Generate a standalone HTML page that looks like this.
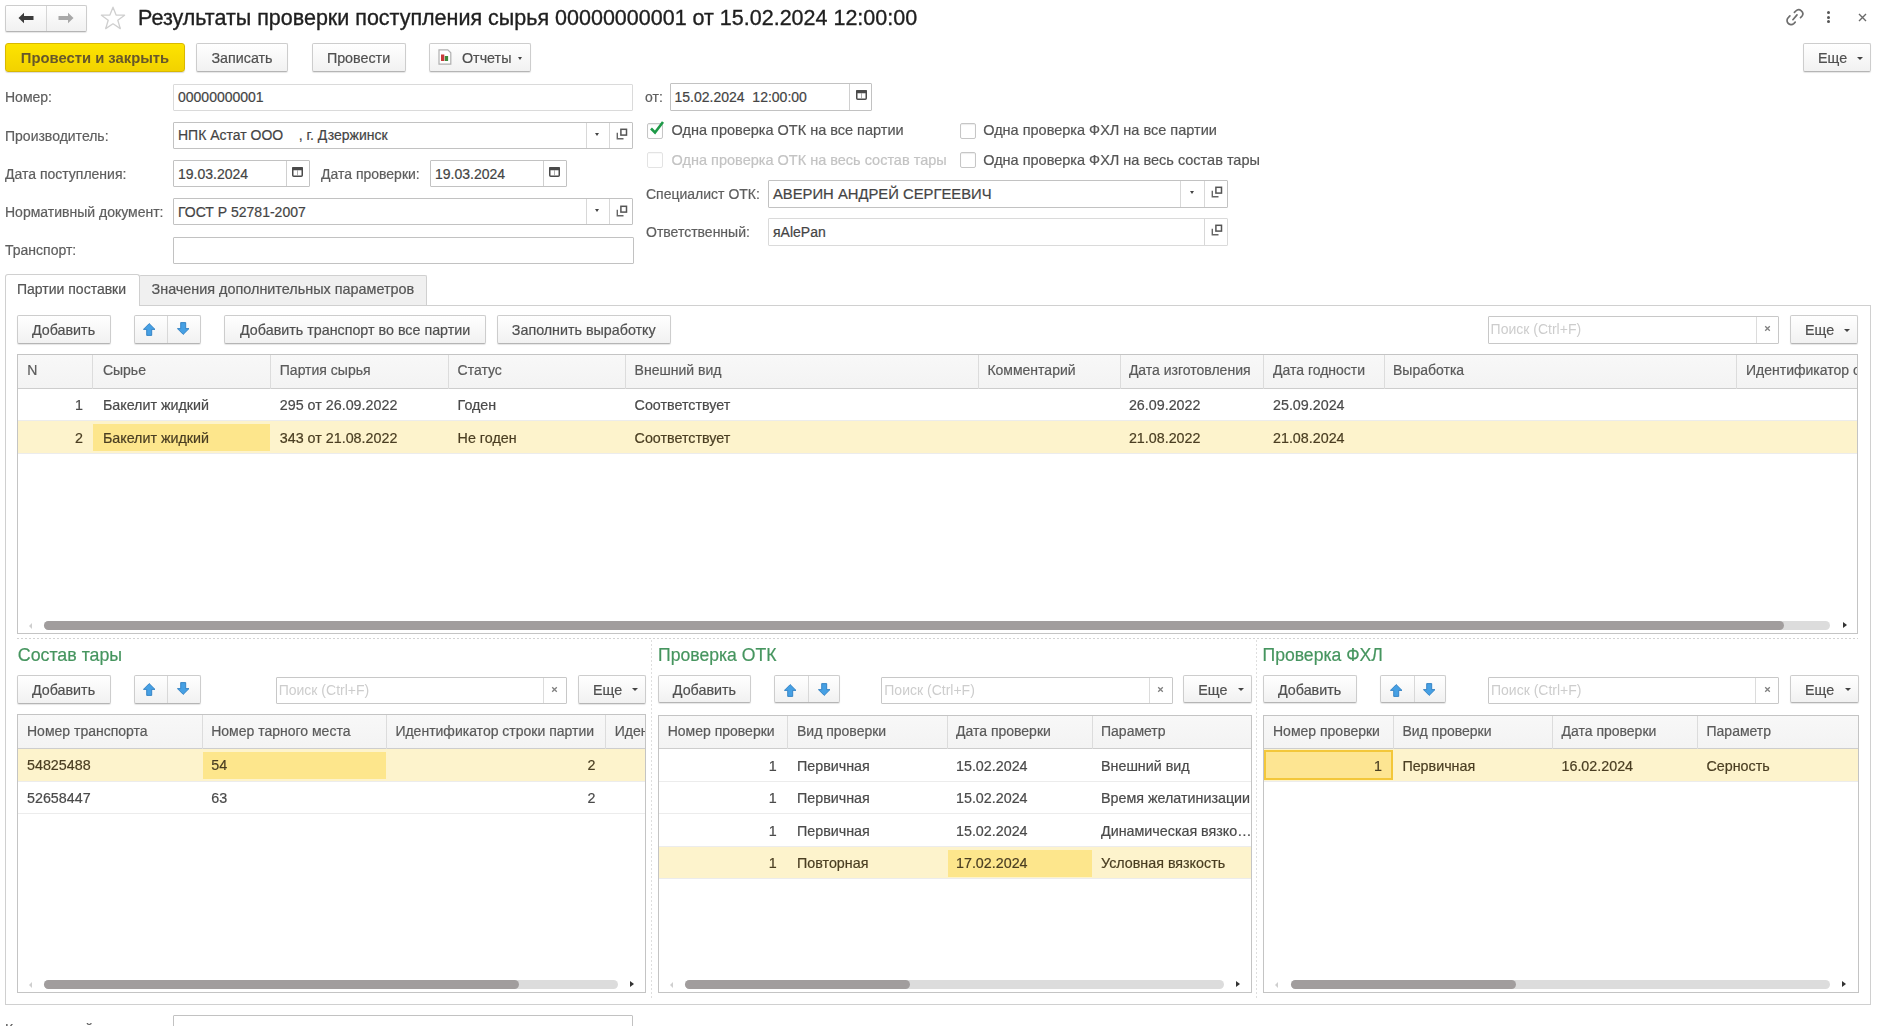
<!DOCTYPE html><html><head><meta charset="utf-8"><style>
html,body{margin:0;padding:0}
body{width:1890px;height:1026px;overflow:hidden;background:#fff;font-family:"Liberation Sans",sans-serif;color:#4d4d4d;position:relative}
.a{position:absolute;white-space:nowrap;-webkit-text-stroke:0.2px currentColor}
.btn{position:absolute;box-sizing:border-box;border:1px solid #cdcdcd;border-bottom-color:#b5b5b5;border-radius:2px;background:linear-gradient(#ffffff,#f1f1f1);box-shadow:0 1px 1px rgba(0,0,0,.10)}
.inp{position:absolute;box-sizing:border-box;border:1px solid #c8c8c8;border-radius:1px;background:#fff}
</style></head><body><div style="position:absolute;left:0;top:0;width:1890px;height:1026px;overflow:hidden;filter:blur(0.4px)">
<div class="btn" style="left:5px;top:5px;width:82px;height:27px"></div>
<div class="a" style="left:46px;top:6px;width:1px;height:25px;background:#d6d6d6"></div>
<svg class="a" style="left:18px;top:12px" width="16" height="12" viewBox="0 0 16 12"><path d="M0.5 6 L6 0.8 V4 H15.5 V8 H6 V11.2 Z" fill="#3b3b3b"/></svg>
<svg class="a" style="left:58px;top:12px" width="16" height="12" viewBox="0 0 16 12"><path d="M15.5 6 L10 0.8 V4 H0.5 V8 H10 V11.2 Z" fill="#a8a8a8"/></svg>
<svg class="a" style="left:100px;top:6px" width="26" height="24" viewBox="0 0 26 24"><path d="M13 1.2 L16.1 9 L24.6 9.2 L17.8 14.3 L20.3 22.6 L13 17.8 L5.7 22.6 L8.2 14.3 L1.4 9.2 L9.9 9 Z" fill="none" stroke="#cfcfcf" stroke-width="1.3" stroke-linejoin="round"/></svg>
<div class="a" style="left:138px;top:6px;font-size:21.5px;color:#1f1f1f;font-weight:400;-webkit-text-stroke:0.35px #1f1f1f">Результаты проверки поступления сырья 00000000001 от 15.02.2024 12:00:00</div>
<svg class="a" style="left:1782px;top:4px" width="28" height="26" viewBox="0 0 28 26"><g fill="none" stroke="#6e6e6e" stroke-width="1.7" stroke-linecap="round"><path d="M12.4 8.4 L13.8 7.0 A4.05 4.05 0 0 1 19.9 12.3 L18.5 13.7"/><path d="M7.9 11.9 L6.5 13.3 A4.1 4.1 0 0 0 11.8 19.6 L13.2 18.2"/><path d="M10.9 15.7 L15 10.9"/></g></svg>
<div class="a" style="left:1827.2px;top:11.2px;width:3px;height:3px;border-radius:50%;background:#555"></div>
<div class="a" style="left:1827.2px;top:15.8px;width:3px;height:3px;border-radius:50%;background:#555"></div>
<div class="a" style="left:1827.2px;top:20.4px;width:3px;height:3px;border-radius:50%;background:#555"></div>
<svg class="a" style="left:1857.5px;top:13px" width="9" height="9" viewBox="0 0 9 9"><path d="M1 1 L8 8 M8 1 L1 8" stroke="#6a6a6a" stroke-width="1.4"/></svg>
<div class="a" style="left:5px;top:43px;width:180px;height:29px;box-sizing:border-box;border:1px solid #d9b800;border-radius:3px;background:linear-gradient(#fde400,#f2d200);box-shadow:0 1px 1px rgba(0,0,0,.15)"></div>
<div class="a" style="left:5px;width:180px;text-align:center;top:49.5px;font-size:14.8px;font-weight:700;color:#66572a;-webkit-text-stroke:0">Провести и закрыть</div>
<div class="btn" style="left:196px;top:43px;width:92px;height:29px"></div>
<div class="a" style="left:196px;width:92px;text-align:center;top:49.5px;font-size:14.3px;color:#505050">Записать</div>
<div class="btn" style="left:311.5px;top:43px;width:94px;height:29px"></div>
<div class="a" style="left:311.5px;width:94px;text-align:center;top:49.5px;font-size:14.3px;color:#505050">Провести</div>
<div class="btn" style="left:428.5px;top:43px;width:102.5px;height:29px"></div>
<svg class="a" style="left:438px;top:49px" width="14" height="16" viewBox="0 0 14 16"><path d="M1 0.8 H9.8 L12.8 3.8 V15.2 H1 Z" fill="#fff" stroke="#b0b0b0" stroke-width="1.2"/><rect x="3" y="5.5" width="3.3" height="6.5" fill="#c83a3a"/><rect x="6.8" y="7" width="3.3" height="5" fill="#3d8a3d"/></svg>
<div class="a" style="left:462px;top:49.5px;font-size:14.3px;color:#505050;font-weight:400;">Отчеты</div>
<div class="a" style="left:517.5px;top:56.5px;width:0;height:0;border-left:2.5px solid transparent;border-right:2.5px solid transparent;border-top:3px solid #444"></div>
<div class="btn" style="left:1803px;top:43px;width:67.5px;height:29px"></div>
<div class="a" style="left:1818px;top:49.5px;font-size:14.3px;color:#505050;font-weight:400;">Еще</div>
<div class="a" style="left:1856.5px;top:56.5px;width:0;height:0;border-left:3px solid transparent;border-right:3px solid transparent;border-top:3px solid #444"></div>
<div class="a" style="left:5px;top:89px;font-size:14px;color:#5e5e5e;font-weight:400;">Номер:</div>
<div class="inp" style="left:173px;top:83.5px;width:460px;height:27px;border-color:#dadada"></div>
<div class="a" style="left:178px;top:89.2px;font-size:14px;color:#444;font-weight:400;">00000000001</div>
<div class="a" style="left:5px;top:127.5px;font-size:14px;color:#5e5e5e;font-weight:400;">Производитель:</div>
<div class="inp" style="left:173px;top:122px;width:460px;height:27px;border-color:#c2c2c2"></div>
<div class="a" style="left:178px;top:127.30000000000001px;font-size:14px;color:#444;font-weight:400;">НПК Астат ООО&nbsp;&nbsp;&nbsp;&nbsp;, г. Дзержинск</div>
<div class="a" style="left:585.5px;top:123px;width:1px;height:25px;background:#d8d8d8"></div>
<div class="a" style="left:594.75px;top:132.5px;width:0;height:0;border-left:2.5px solid transparent;border-right:2.5px solid transparent;border-top:3px solid #444"></div>
<div class="a" style="left:609px;top:123px;width:1px;height:25px;background:#d8d8d8"></div>
<svg class="a" style="left:615.5px;top:128.2px" width="12" height="12" viewBox="0 0 12 12"><rect x="4.9" y="1.3" width="5.6" height="5.8" fill="none" stroke="#555" stroke-width="1.5"/><path d="M1.3 4.8 V10.7 H7.5" fill="none" stroke="#666" stroke-width="1.4"/></svg>
<div class="a" style="left:5px;top:165.5px;font-size:14px;color:#5e5e5e;font-weight:400;">Дата поступления:</div>
<div class="inp" style="left:173px;top:160px;width:137px;height:27px;border-color:#c2c2c2"></div>
<div class="a" style="left:178px;top:165.5px;font-size:14px;color:#444;font-weight:400;">19.03.2024</div>
<div class="a" style="left:285.7px;top:161px;width:1px;height:25px;background:#d0d0d0"></div>
<svg class="a" style="left:292.2px;top:166.7px" width="11" height="10" viewBox="0 0 11 10"><rect x="0.75" y="0.75" width="9.5" height="8.5" rx="1" fill="none" stroke="#4a4a4a" stroke-width="1.5"/><rect x="0" y="0" width="11" height="3.2" rx="1" fill="#4a4a4a"/><path d="M5.5 3 V9" stroke="#9a9a9a" stroke-width="0.8"/></svg>
<div class="a" style="left:321px;top:165.5px;font-size:14px;color:#5e5e5e;font-weight:400;">Дата проверки:</div>
<div class="inp" style="left:430px;top:160px;width:136.5px;height:27px;border-color:#c2c2c2"></div>
<div class="a" style="left:435px;top:165.5px;font-size:14px;color:#444;font-weight:400;">19.03.2024</div>
<div class="a" style="left:542.5px;top:161px;width:1px;height:25px;background:#d0d0d0"></div>
<svg class="a" style="left:549.0px;top:166.7px" width="11" height="10" viewBox="0 0 11 10"><rect x="0.75" y="0.75" width="9.5" height="8.5" rx="1" fill="none" stroke="#4a4a4a" stroke-width="1.5"/><rect x="0" y="0" width="11" height="3.2" rx="1" fill="#4a4a4a"/><path d="M5.5 3 V9" stroke="#9a9a9a" stroke-width="0.8"/></svg>
<div class="a" style="left:5px;top:203.7px;font-size:14px;color:#5e5e5e;font-weight:400;">Нормативный документ:</div>
<div class="inp" style="left:173px;top:198.3px;width:460px;height:27px;border-color:#c2c2c2"></div>
<div class="a" style="left:178px;top:203.60000000000002px;font-size:14px;color:#444;font-weight:400;">ГОСТ Р 52781-2007</div>
<div class="a" style="left:585.5px;top:199.3px;width:1px;height:25px;background:#d8d8d8"></div>
<div class="a" style="left:594.75px;top:208.8px;width:0;height:0;border-left:2.5px solid transparent;border-right:2.5px solid transparent;border-top:3px solid #444"></div>
<div class="a" style="left:609px;top:199.3px;width:1px;height:25px;background:#d8d8d8"></div>
<svg class="a" style="left:615.5px;top:204.5px" width="12" height="12" viewBox="0 0 12 12"><rect x="4.9" y="1.3" width="5.6" height="5.8" fill="none" stroke="#555" stroke-width="1.5"/><path d="M1.3 4.8 V10.7 H7.5" fill="none" stroke="#666" stroke-width="1.4"/></svg>
<div class="a" style="left:5px;top:242px;font-size:14px;color:#5e5e5e;font-weight:400;">Транспорт:</div>
<div class="inp" style="left:173px;top:236.5px;width:460.5px;height:27.3px;border-color:#c2c2c2"></div>
<div class="a" style="left:5px;top:1021px;font-size:14px;color:#5e5e5e;font-weight:400;">Комментарий:</div>
<div class="inp" style="left:173.3px;top:1014.5px;width:459.5px;height:30px;border-color:#c2c2c2"></div>
<div class="a" style="left:645px;top:89px;font-size:14px;color:#5e5e5e;font-weight:400;">от:</div>
<div class="inp" style="left:669.5px;top:83.4px;width:202px;height:27.5px;border-color:#c2c2c2"></div>
<div class="a" style="left:674.5px;top:89.4px;font-size:14px;color:#444;font-weight:400;">15.02.2024&nbsp;&nbsp;12:00:00</div>
<div class="a" style="left:849px;top:84.4px;width:1px;height:25.5px;background:#d0d0d0"></div>
<svg class="a" style="left:855.5px;top:90.10000000000001px" width="11" height="10" viewBox="0 0 11 10"><rect x="0.75" y="0.75" width="9.5" height="8.5" rx="1" fill="none" stroke="#4a4a4a" stroke-width="1.5"/><rect x="0" y="0" width="11" height="3.2" rx="1" fill="#4a4a4a"/><path d="M5.5 3 V9" stroke="#9a9a9a" stroke-width="0.8"/></svg>
<div class="a" style="left:647px;top:123px;width:16px;height:16px;box-sizing:border-box;border:1px solid #c6c6c6;border-radius:2px;background:#fff;box-shadow:inset 0 1px 1px rgba(0,0,0,0.08)"></div>
<svg class="a" style="left:649px;top:120px" width="16" height="16" viewBox="0 0 16 16"><path d="M2 8.5 L6 12.5 L14 2" fill="none" stroke="#1e9a48" stroke-width="2.6"/></svg>
<div class="a" style="left:671.6px;top:122.30000000000001px;font-size:14.5px;color:#555;font-weight:400;">Одна проверка ОТК на все партии</div>
<div class="a" style="left:647px;top:152px;width:16px;height:16px;box-sizing:border-box;border:1px solid #e3e3e3;border-radius:2px;background:#fff;box-shadow:inset 0 1px 1px rgba(0,0,0,0.03)"></div>
<div class="a" style="left:671.6px;top:151.6px;font-size:14.5px;color:#c3c3c3;font-weight:400;">Одна проверка ОТК на весь состав тары</div>
<div class="a" style="left:960px;top:123px;width:16px;height:16px;box-sizing:border-box;border:1px solid #c6c6c6;border-radius:2px;background:#fff;box-shadow:inset 0 1px 1px rgba(0,0,0,0.08)"></div>
<div class="a" style="left:983.2px;top:122.30000000000001px;font-size:14.5px;color:#555;font-weight:400;">Одна проверка ФХЛ на все партии</div>
<div class="a" style="left:960px;top:152px;width:16px;height:16px;box-sizing:border-box;border:1px solid #c6c6c6;border-radius:2px;background:#fff;box-shadow:inset 0 1px 1px rgba(0,0,0,0.08)"></div>
<div class="a" style="left:983.2px;top:151.6px;font-size:14.5px;color:#555;font-weight:400;">Одна проверка ФХЛ на весь состав тары</div>
<div class="a" style="left:646px;top:185.5px;font-size:14px;color:#5e5e5e;font-weight:400;">Специалист ОТК:</div>
<div class="inp" style="left:768px;top:180px;width:460px;height:27.5px;border-color:#c2c2c2"></div>
<div class="a" style="left:773px;top:186px;font-size:14.8px;color:#444;font-weight:400;">АВЕРИН АНДРЕЙ СЕРГЕЕВИЧ</div>
<div class="a" style="left:1180px;top:181px;width:1px;height:25.5px;background:#d8d8d8"></div>
<div class="a" style="left:1189.5px;top:190.75px;width:0;height:0;border-left:2.5px solid transparent;border-right:2.5px solid transparent;border-top:3px solid #444"></div>
<div class="a" style="left:1204px;top:181px;width:1px;height:25.5px;background:#d8d8d8"></div>
<svg class="a" style="left:1210.5px;top:186.2px" width="12" height="12" viewBox="0 0 12 12"><rect x="4.9" y="1.3" width="5.6" height="5.8" fill="none" stroke="#555" stroke-width="1.5"/><path d="M1.3 4.8 V10.7 H7.5" fill="none" stroke="#666" stroke-width="1.4"/></svg>
<div class="a" style="left:646px;top:223.5px;font-size:14px;color:#5e5e5e;font-weight:400;">Ответственный:</div>
<div class="inp" style="left:768px;top:218px;width:460px;height:27.5px;border-color:#dadada"></div>
<div class="a" style="left:773px;top:224px;font-size:14px;color:#444;font-weight:400;">яAlePan</div>
<div class="a" style="left:1204px;top:219px;width:1px;height:25.5px;background:#d8d8d8"></div>
<svg class="a" style="left:1210.5px;top:224.2px" width="12" height="12" viewBox="0 0 12 12"><rect x="4.9" y="1.3" width="5.6" height="5.8" fill="none" stroke="#555" stroke-width="1.5"/><path d="M1.3 4.8 V10.7 H7.5" fill="none" stroke="#666" stroke-width="1.4"/></svg>
<div class="a" style="left:5px;top:304.5px;width:1865.5px;height:700px;box-sizing:border-box;border:1px solid #d0d0d0;background:#fff"></div>
<div class="a" style="left:139px;top:275px;width:288px;height:30px;box-sizing:border-box;border:1px solid #d0d0d0;border-bottom:none;background:#f0f0f0;border-radius:2px 2px 0 0"></div>
<div class="a" style="left:5px;top:274px;width:134.5px;height:32px;box-sizing:border-box;border:1px solid #d0d0d0;border-bottom:none;background:#fff;border-radius:3px 3px 0 0"></div>
<div class="a" style="left:17px;top:281px;font-size:14px;color:#555;font-weight:400;">Партии поставки</div>
<div class="a" style="left:151.5px;top:281px;font-size:14.4px;color:#555;font-weight:400;">Значения дополнительных параметров</div>
<div class="btn" style="left:16.5px;top:315px;width:94px;height:29px"></div>
<div class="a" style="left:16.5px;width:94px;text-align:center;top:321.5px;font-size:14.3px;color:#505050">Добавить</div>
<div class="btn" style="left:134px;top:315px;width:66.6px;height:29px"></div>
<div class="a" style="left:167.4px;top:316px;width:1px;height:27px;background:#d8d8d8"></div>
<svg class="a" style="left:143.3px;top:323.3px" width="13" height="13" viewBox="0 0 13 13"><path d="M6.2 0.6 L12 6.4 H8.7 V12.4 H3.7 V6.4 H0.4 Z" fill="#46a0e4" stroke="#2f7fc2" stroke-width="0.9" stroke-linejoin="round"/></svg>
<svg class="a" style="left:176.70000000000002px;top:322.3px" width="13" height="13" viewBox="0 0 13 13"><path d="M6.2 12.4 L12 6.6 H8.7 V0.6 H3.7 V6.6 H0.4 Z" fill="#46a0e4" stroke="#2f7fc2" stroke-width="0.9" stroke-linejoin="round"/></svg>
<div class="btn" style="left:224px;top:315px;width:262.3px;height:29px"></div>
<div class="a" style="left:224px;width:262.3px;text-align:center;top:321.5px;font-size:14.3px;color:#505050">Добавить транспорт во все партии</div>
<div class="btn" style="left:496.5px;top:315px;width:174.5px;height:29px"></div>
<div class="a" style="left:496.5px;width:174.5px;text-align:center;top:321.5px;font-size:14.3px;color:#505050">Заполнить выработку</div>
<div class="inp" style="left:1487.6px;top:315.5px;width:291px;height:28px;border-color:#c8c8c8"></div>
<div class="a" style="left:1756px;top:316.5px;width:1px;height:26px;background:#dcdcdc"></div>
<div class="a" style="left:1490.6px;top:321.0px;font-size:14px;color:#cdcdcd;font-weight:400;-webkit-text-stroke:0">Поиск (Ctrl+F)</div>
<svg class="a" style="left:1763.8px;top:325.0px" width="7" height="7" viewBox="0 0 7 7"><path d="M1.2 1.2 L5.8 5.8 M5.8 1.2 L1.2 5.8" stroke="#808080" stroke-width="1.3"/></svg>
<div class="btn" style="left:1790px;top:315px;width:68.3px;height:29px"></div>
<div class="a" style="left:1805px;top:321.5px;font-size:14.3px;color:#505050;font-weight:400;">Еще</div>
<div class="a" style="left:1844.3px;top:328.5px;width:0;height:0;border-left:3px solid transparent;border-right:3px solid transparent;border-top:3px solid #444"></div>
<div class="a" style="left:16.5px;top:353.6px;width:1841.8px;height:280.4px;box-sizing:border-box;border:1px solid #c4c4c4;background:#fff;overflow:hidden">
<div class="a" style="left:0;top:0;width:1841.8px;height:34.4px;background:linear-gradient(#f8f8f8,#f3f3f3);border-bottom:1px solid #cdcdcd;box-sizing:border-box"></div>
<div class="a" style="left:74.5px;top:0;width:1px;height:34.4px;background:#dcdcdc"></div>
<div class="a" style="left:252.89999999999998px;top:0;width:1px;height:34.4px;background:#dcdcdc"></div>
<div class="a" style="left:430.5px;top:0;width:1px;height:34.4px;background:#dcdcdc"></div>
<div class="a" style="left:607.7px;top:0;width:1px;height:34.4px;background:#dcdcdc"></div>
<div class="a" style="left:960.3px;top:0;width:1px;height:34.4px;background:#dcdcdc"></div>
<div class="a" style="left:1102.5px;top:0;width:1px;height:34.4px;background:#dcdcdc"></div>
<div class="a" style="left:1245.5px;top:0;width:1px;height:34.4px;background:#dcdcdc"></div>
<div class="a" style="left:1366.5px;top:0;width:1px;height:34.4px;background:#dcdcdc"></div>
<div class="a" style="left:1718.9px;top:0;width:1px;height:34.4px;background:#dcdcdc"></div>
<div class="a" style="left:0;top:65.9px;width:1841.8px;height:1px;background:#ececec"></div>
<div class="a" style="left:0;top:66.9px;width:1841.8px;height:32.5px;background:#fdf3cc"></div>
<div class="a" style="left:0;top:98.4px;width:1841.8px;height:1px;background:#ececec"></div>
<div class="a" style="left:75.5px;top:69.9px;width:177.39999999999998px;height:27.0px;background:#fde68c"></div>
<div class="a" style="left:9.8px;top:7.699999999999999px;font-size:14px;color:#5a5a5a">N</div>
<div class="a" style="left:85.4px;top:7.699999999999999px;font-size:14px;color:#5a5a5a">Сырье</div>
<div class="a" style="left:262.3px;top:7.699999999999999px;font-size:14px;color:#5a5a5a">Партия сырья</div>
<div class="a" style="left:440.1px;top:7.699999999999999px;font-size:14px;color:#5a5a5a">Статус</div>
<div class="a" style="left:617.1px;top:7.699999999999999px;font-size:14px;color:#5a5a5a">Внешний вид</div>
<div class="a" style="left:969.9px;top:7.699999999999999px;font-size:14px;color:#5a5a5a">Комментарий</div>
<div class="a" style="left:1111.4px;top:7.699999999999999px;font-size:14px;color:#5a5a5a">Дата изготовления</div>
<div class="a" style="left:1255.5px;top:7.699999999999999px;font-size:14px;color:#5a5a5a">Дата годности</div>
<div class="a" style="left:1375.5px;top:7.699999999999999px;font-size:14px;color:#5a5a5a">Выработка</div>
<div class="a" style="left:1728.5px;top:7.699999999999999px;font-size:14px;color:#5a5a5a">Идентификатор строки</div>
<div class="a" style="right:1774.3px;top:42.65px;font-size:14.3px;color:#4a4a4a">1</div>
<div class="a" style="left:85.4px;top:42.65px;font-size:14.3px;color:#4a4a4a">Бакелит жидкий</div>
<div class="a" style="left:262.3px;top:42.65px;font-size:14.3px;color:#4a4a4a">295 от 26.09.2022</div>
<div class="a" style="left:440.1px;top:42.65px;font-size:14.3px;color:#4a4a4a">Годен</div>
<div class="a" style="left:617.1px;top:42.65px;font-size:14.3px;color:#4a4a4a">Соответствует</div>
<div class="a" style="left:1111.4px;top:42.65px;font-size:14.3px;color:#4a4a4a">26.09.2022</div>
<div class="a" style="left:1255.5px;top:42.65px;font-size:14.3px;color:#4a4a4a">25.09.2024</div>
<div class="a" style="right:1774.3px;top:75.15px;font-size:14.3px;color:#4a3e22">2</div>
<div class="a" style="left:85.4px;top:75.15px;font-size:14.3px;color:#4a3e22">Бакелит жидкий</div>
<div class="a" style="left:262.3px;top:75.15px;font-size:14.3px;color:#4a3e22">343 от 21.08.2022</div>
<div class="a" style="left:440.1px;top:75.15px;font-size:14.3px;color:#4a3e22">Не годен</div>
<div class="a" style="left:617.1px;top:75.15px;font-size:14.3px;color:#4a3e22">Соответствует</div>
<div class="a" style="left:1111.4px;top:75.15px;font-size:14.3px;color:#4a3e22">21.08.2022</div>
<div class="a" style="left:1255.5px;top:75.15px;font-size:14.3px;color:#4a3e22">21.08.2024</div>
</div>
<div class="a" style="left:29px;top:622.5px;width:0;height:0;border-top:3px solid transparent;border-bottom:3px solid transparent;border-right:3px solid #cfcfcf"></div>
<div class="a" style="left:44px;top:621px;width:1786px;height:9px;border-radius:4.5px;background:#dcdcdc"></div>
<div class="a" style="left:44px;top:621px;width:1739.7px;height:9px;border-radius:4.5px;background:#a19d9d"></div>
<div class="a" style="left:1842.5px;top:622.0px;width:0;height:0;border-top:3.5px solid transparent;border-bottom:3.5px solid transparent;border-left:4.5px solid #333"></div>
<div class="a" style="left:17px;top:638px;width:1841px;height:1px;background:repeating-linear-gradient(90deg,#d2d2d2 0 2px,transparent 2px 4px)"></div>
<div class="a" style="left:651px;top:640px;width:1px;height:360px;background:repeating-linear-gradient(180deg,#dedede 0 2px,transparent 2px 4px)"></div>
<div class="a" style="left:1256px;top:640px;width:1px;height:360px;background:repeating-linear-gradient(180deg,#dedede 0 2px,transparent 2px 4px)"></div>
<div class="a" style="left:17.8px;top:645px;font-size:17.8px;color:#46955f;font-weight:400;">Состав тары</div>
<div class="a" style="left:658.1px;top:645px;font-size:17.6px;color:#46955f;font-weight:400;">Проверка ОТК</div>
<div class="a" style="left:1262.5px;top:645px;font-size:17.6px;color:#46955f;font-weight:400;">Проверка ФХЛ</div>
<div class="btn" style="left:16.5px;top:675px;width:94px;height:28.5px"></div>
<div class="a" style="left:16.5px;width:94px;text-align:center;top:681.5px;font-size:14.3px;color:#505050">Добавить</div>
<div class="btn" style="left:134px;top:675px;width:66.6px;height:28.5px"></div>
<div class="a" style="left:167.4px;top:676px;width:1px;height:26.5px;background:#d8d8d8"></div>
<svg class="a" style="left:143.3px;top:683.3px" width="13" height="13" viewBox="0 0 13 13"><path d="M6.2 0.6 L12 6.4 H8.7 V12.4 H3.7 V6.4 H0.4 Z" fill="#46a0e4" stroke="#2f7fc2" stroke-width="0.9" stroke-linejoin="round"/></svg>
<svg class="a" style="left:176.70000000000002px;top:682.3px" width="13" height="13" viewBox="0 0 13 13"><path d="M6.2 12.4 L12 6.6 H8.7 V0.6 H3.7 V6.6 H0.4 Z" fill="#46a0e4" stroke="#2f7fc2" stroke-width="0.9" stroke-linejoin="round"/></svg>
<div class="inp" style="left:275.7px;top:676.5px;width:291px;height:27px;border-color:#c8c8c8"></div>
<div class="a" style="left:542.7px;top:677.5px;width:1px;height:25px;background:#dcdcdc"></div>
<div class="a" style="left:278.7px;top:682.0px;font-size:14px;color:#cdcdcd;font-weight:400;-webkit-text-stroke:0">Поиск (Ctrl+F)</div>
<svg class="a" style="left:551.2px;top:685.5px" width="7" height="7" viewBox="0 0 7 7"><path d="M1.2 1.2 L5.8 5.8 M5.8 1.2 L1.2 5.8" stroke="#808080" stroke-width="1.3"/></svg>
<div class="btn" style="left:578px;top:675px;width:67.5px;height:28.5px"></div>
<div class="a" style="left:593px;top:681.5px;font-size:14.3px;color:#505050;font-weight:400;">Еще</div>
<div class="a" style="left:631.5px;top:688.25px;width:0;height:0;border-left:3px solid transparent;border-right:3px solid transparent;border-top:3px solid #444"></div>
<div class="a" style="left:16.5px;top:714px;width:629.5px;height:278.5px;box-sizing:border-box;border:1px solid #c4c4c4;background:#fff;overflow:hidden">
<div class="a" style="left:0;top:0;width:629.5px;height:34.2px;background:linear-gradient(#f8f8f8,#f3f3f3);border-bottom:1px solid #cdcdcd;box-sizing:border-box"></div>
<div class="a" style="left:184.1px;top:0;width:1px;height:34.2px;background:#dcdcdc"></div>
<div class="a" style="left:368.2px;top:0;width:1px;height:34.2px;background:#dcdcdc"></div>
<div class="a" style="left:587.1px;top:0;width:1px;height:34.2px;background:#dcdcdc"></div>
<div class="a" style="left:0;top:34.2px;width:629.5px;height:32.5px;background:#fdf3cc"></div>
<div class="a" style="left:0;top:65.7px;width:629.5px;height:1px;background:#ececec"></div>
<div class="a" style="left:0;top:98.2px;width:629.5px;height:1px;background:#ececec"></div>
<div class="a" style="left:185.1px;top:37.2px;width:183.1px;height:27.0px;background:#fde68c"></div>
<div class="a" style="left:9.5px;top:7.600000000000001px;font-size:14px;color:#5a5a5a">Номер транспорта</div>
<div class="a" style="left:193.7px;top:7.600000000000001px;font-size:14px;color:#5a5a5a">Номер тарного места</div>
<div class="a" style="left:377.9px;top:7.600000000000001px;font-size:14px;color:#5a5a5a">Идентификатор строки партии</div>
<div class="a" style="left:597.3px;top:7.600000000000001px;font-size:14px;color:#5a5a5a">Идентификатор</div>
<div class="a" style="left:9.5px;top:42.45px;font-size:14.3px;color:#4a3e22">54825488</div>
<div class="a" style="left:193.7px;top:42.45px;font-size:14.3px;color:#4a3e22">54</div>
<div class="a" style="right:49.5px;top:42.45px;font-size:14.3px;color:#4a3e22">2</div>
<div class="a" style="left:9.5px;top:74.95px;font-size:14.3px;color:#4a4a4a">52658447</div>
<div class="a" style="left:193.7px;top:74.95px;font-size:14.3px;color:#4a4a4a">63</div>
<div class="a" style="right:49.5px;top:74.95px;font-size:14.3px;color:#4a4a4a">2</div>
</div>
<div class="a" style="left:29px;top:981.5px;width:0;height:0;border-top:3px solid transparent;border-bottom:3px solid transparent;border-right:3px solid #cfcfcf"></div>
<div class="a" style="left:44px;top:980px;width:574px;height:9px;border-radius:4.5px;background:#dcdcdc"></div>
<div class="a" style="left:44px;top:980px;width:475px;height:9px;border-radius:4.5px;background:#a19d9d"></div>
<div class="a" style="left:630px;top:981.0px;width:0;height:0;border-top:3.5px solid transparent;border-bottom:3.5px solid transparent;border-left:4.5px solid #333"></div>
<div class="btn" style="left:658.1px;top:675.4px;width:92.6px;height:28px"></div>
<div class="a" style="left:658.1px;width:92.6px;text-align:center;top:681.9px;font-size:14.3px;color:#505050">Добавить</div>
<div class="btn" style="left:774.4px;top:675.4px;width:66px;height:28px"></div>
<div class="a" style="left:808.3px;top:676.4px;width:1px;height:26px;background:#d8d8d8"></div>
<svg class="a" style="left:783.6999999999999px;top:683.6999999999999px" width="13" height="13" viewBox="0 0 13 13"><path d="M6.2 0.6 L12 6.4 H8.7 V12.4 H3.7 V6.4 H0.4 Z" fill="#46a0e4" stroke="#2f7fc2" stroke-width="0.9" stroke-linejoin="round"/></svg>
<svg class="a" style="left:817.5999999999999px;top:682.6999999999999px" width="13" height="13" viewBox="0 0 13 13"><path d="M6.2 12.4 L12 6.6 H8.7 V0.6 H3.7 V6.6 H0.4 Z" fill="#46a0e4" stroke="#2f7fc2" stroke-width="0.9" stroke-linejoin="round"/></svg>
<div class="inp" style="left:881.3px;top:676.5px;width:291.4px;height:27px;border-color:#c8c8c8"></div>
<div class="a" style="left:1149px;top:677.5px;width:1px;height:25px;background:#dcdcdc"></div>
<div class="a" style="left:884.3px;top:682.0px;font-size:14px;color:#cdcdcd;font-weight:400;-webkit-text-stroke:0">Поиск (Ctrl+F)</div>
<svg class="a" style="left:1157.35px;top:685.5px" width="7" height="7" viewBox="0 0 7 7"><path d="M1.2 1.2 L5.8 5.8 M5.8 1.2 L1.2 5.8" stroke="#808080" stroke-width="1.3"/></svg>
<div class="btn" style="left:1183.3px;top:675.4px;width:68.4px;height:28px"></div>
<div class="a" style="left:1198.3px;top:681.9px;font-size:14.3px;color:#505050;font-weight:400;">Еще</div>
<div class="a" style="left:1237.7px;top:688.4px;width:0;height:0;border-left:3px solid transparent;border-right:3px solid transparent;border-top:3px solid #444"></div>
<div class="a" style="left:658px;top:714.5px;width:593.5px;height:278px;box-sizing:border-box;border:1px solid #c4c4c4;background:#fff;overflow:hidden">
<div class="a" style="left:0;top:0;width:593.5px;height:33.8px;background:linear-gradient(#f8f8f8,#f3f3f3);border-bottom:1px solid #cdcdcd;box-sizing:border-box"></div>
<div class="a" style="left:128.29999999999995px;top:0;width:1px;height:33.8px;background:#dcdcdc"></div>
<div class="a" style="left:287.70000000000005px;top:0;width:1px;height:33.8px;background:#dcdcdc"></div>
<div class="a" style="left:432.70000000000005px;top:0;width:1px;height:33.8px;background:#dcdcdc"></div>
<div class="a" style="left:0;top:65.3px;width:593.5px;height:1px;background:#ececec"></div>
<div class="a" style="left:0;top:97.8px;width:593.5px;height:1px;background:#ececec"></div>
<div class="a" style="left:0;top:130.3px;width:593.5px;height:1px;background:#ececec"></div>
<div class="a" style="left:0;top:131.3px;width:593.5px;height:32.5px;background:#fdf3cc"></div>
<div class="a" style="left:0;top:162.8px;width:593.5px;height:1px;background:#ececec"></div>
<div class="a" style="left:288.70000000000005px;top:134.3px;width:144.0px;height:27.0px;background:#fde68c"></div>
<div class="a" style="left:8.700000000000045px;top:7.399999999999999px;font-size:14px;color:#5a5a5a">Номер проверки</div>
<div class="a" style="left:138px;top:7.399999999999999px;font-size:14px;color:#5a5a5a">Вид проверки</div>
<div class="a" style="left:297px;top:7.399999999999999px;font-size:14px;color:#5a5a5a">Дата проверки</div>
<div class="a" style="left:442px;top:7.399999999999999px;font-size:14px;color:#5a5a5a">Параметр</div>
<div class="a" style="right:473.9px;top:42.05px;font-size:14.3px;color:#4a4a4a">1</div>
<div class="a" style="left:138px;top:42.05px;font-size:14.3px;color:#4a4a4a">Первичная</div>
<div class="a" style="left:297px;top:42.05px;font-size:14.3px;color:#4a4a4a">15.02.2024</div>
<div class="a" style="left:442px;top:42.05px;font-size:14.3px;color:#4a4a4a">Внешний вид</div>
<div class="a" style="right:473.9px;top:74.55px;font-size:14.3px;color:#4a4a4a">1</div>
<div class="a" style="left:138px;top:74.55px;font-size:14.3px;color:#4a4a4a">Первичная</div>
<div class="a" style="left:297px;top:74.55px;font-size:14.3px;color:#4a4a4a">15.02.2024</div>
<div class="a" style="left:442px;top:74.55px;font-size:14.3px;color:#4a4a4a">Время желатинизации</div>
<div class="a" style="right:473.9px;top:107.05px;font-size:14.3px;color:#4a4a4a">1</div>
<div class="a" style="left:138px;top:107.05px;font-size:14.3px;color:#4a4a4a">Первичная</div>
<div class="a" style="left:297px;top:107.05px;font-size:14.3px;color:#4a4a4a">15.02.2024</div>
<div class="a" style="left:442px;top:107.05px;font-size:14.3px;color:#4a4a4a">Динамическая вязко…</div>
<div class="a" style="right:473.9px;top:139.55px;font-size:14.3px;color:#4a3e22">1</div>
<div class="a" style="left:138px;top:139.55px;font-size:14.3px;color:#4a3e22">Повторная</div>
<div class="a" style="left:297px;top:139.55px;font-size:14.3px;color:#4a3e22">17.02.2024</div>
<div class="a" style="left:442px;top:139.55px;font-size:14.3px;color:#4a3e22">Условная вязкость</div>
</div>
<div class="a" style="left:669.8px;top:981.5px;width:0;height:0;border-top:3px solid transparent;border-bottom:3px solid transparent;border-right:3px solid #cfcfcf"></div>
<div class="a" style="left:684.8px;top:980px;width:538.9000000000001px;height:9px;border-radius:4.5px;background:#dcdcdc"></div>
<div class="a" style="left:684.8px;top:980px;width:225.20000000000005px;height:9px;border-radius:4.5px;background:#a19d9d"></div>
<div class="a" style="left:1235.6px;top:981.0px;width:0;height:0;border-top:3.5px solid transparent;border-bottom:3.5px solid transparent;border-left:4.5px solid #333"></div>
<div class="btn" style="left:1262.5px;top:675.4px;width:94.2px;height:28px"></div>
<div class="a" style="left:1262.5px;width:94.2px;text-align:center;top:681.9px;font-size:14.3px;color:#505050">Добавить</div>
<div class="btn" style="left:1380.4px;top:675.4px;width:66px;height:28px"></div>
<div class="a" style="left:1413.5px;top:676.4px;width:1px;height:26px;background:#d8d8d8"></div>
<svg class="a" style="left:1389.7px;top:683.6999999999999px" width="13" height="13" viewBox="0 0 13 13"><path d="M6.2 0.6 L12 6.4 H8.7 V12.4 H3.7 V6.4 H0.4 Z" fill="#46a0e4" stroke="#2f7fc2" stroke-width="0.9" stroke-linejoin="round"/></svg>
<svg class="a" style="left:1422.8px;top:682.6999999999999px" width="13" height="13" viewBox="0 0 13 13"><path d="M6.2 12.4 L12 6.6 H8.7 V0.6 H3.7 V6.6 H0.4 Z" fill="#46a0e4" stroke="#2f7fc2" stroke-width="0.9" stroke-linejoin="round"/></svg>
<div class="inp" style="left:1488px;top:676.5px;width:291.3px;height:27px;border-color:#c8c8c8"></div>
<div class="a" style="left:1755.2px;top:677.5px;width:1px;height:25px;background:#dcdcdc"></div>
<div class="a" style="left:1491px;top:682.0px;font-size:14px;color:#cdcdcd;font-weight:400;-webkit-text-stroke:0">Поиск (Ctrl+F)</div>
<svg class="a" style="left:1763.75px;top:685.5px" width="7" height="7" viewBox="0 0 7 7"><path d="M1.2 1.2 L5.8 5.8 M5.8 1.2 L1.2 5.8" stroke="#808080" stroke-width="1.3"/></svg>
<div class="btn" style="left:1790px;top:675.4px;width:68.5px;height:28px"></div>
<div class="a" style="left:1805px;top:681.9px;font-size:14.3px;color:#505050;font-weight:400;">Еще</div>
<div class="a" style="left:1844.5px;top:688.4px;width:0;height:0;border-left:3px solid transparent;border-right:3px solid transparent;border-top:3px solid #444"></div>
<div class="a" style="left:1262.5px;top:714.5px;width:596px;height:278px;box-sizing:border-box;border:1px solid #c4c4c4;background:#fff;overflow:hidden">
<div class="a" style="left:0;top:0;width:596px;height:33.8px;background:linear-gradient(#f8f8f8,#f3f3f3);border-bottom:1px solid #cdcdcd;box-sizing:border-box"></div>
<div class="a" style="left:129.4000000000001px;top:0;width:1px;height:33.8px;background:#dcdcdc"></div>
<div class="a" style="left:288.9000000000001px;top:0;width:1px;height:33.8px;background:#dcdcdc"></div>
<div class="a" style="left:433.5px;top:0;width:1px;height:33.8px;background:#dcdcdc"></div>
<div class="a" style="left:0;top:33.8px;width:596px;height:32.5px;background:#fdf3cc"></div>
<div class="a" style="left:0;top:65.3px;width:596px;height:1px;background:#ececec"></div>
<div class="a" style="left:0px;top:34.3px;width:129.4000000000001px;height:30.5px;box-sizing:border-box;border:2px solid #f3c73a;background:#fde592"></div>
<div class="a" style="left:9.5px;top:7.399999999999999px;font-size:14px;color:#5a5a5a">Номер проверки</div>
<div class="a" style="left:138.9000000000001px;top:7.399999999999999px;font-size:14px;color:#5a5a5a">Вид проверки</div>
<div class="a" style="left:298.0px;top:7.399999999999999px;font-size:14px;color:#5a5a5a">Дата проверки</div>
<div class="a" style="left:443.0px;top:7.399999999999999px;font-size:14px;color:#5a5a5a">Параметр</div>
<div class="a" style="right:475.5px;top:42.05px;font-size:14.3px;color:#4a3e22">1</div>
<div class="a" style="left:138.9000000000001px;top:42.05px;font-size:14.3px;color:#4a3e22">Первичная</div>
<div class="a" style="left:298.0px;top:42.05px;font-size:14.3px;color:#4a3e22">16.02.2024</div>
<div class="a" style="left:443.0px;top:42.05px;font-size:14.3px;color:#4a3e22">Серность</div>
</div>
<div class="a" style="left:1275px;top:981.5px;width:0;height:0;border-top:3px solid transparent;border-bottom:3px solid transparent;border-right:3px solid #cfcfcf"></div>
<div class="a" style="left:1290.7px;top:980px;width:539.5999999999999px;height:9px;border-radius:4.5px;background:#dcdcdc"></div>
<div class="a" style="left:1290.7px;top:980px;width:225.70000000000005px;height:9px;border-radius:4.5px;background:#a19d9d"></div>
<div class="a" style="left:1842.4px;top:981.0px;width:0;height:0;border-top:3.5px solid transparent;border-bottom:3.5px solid transparent;border-left:4.5px solid #333"></div>
</div></body></html>
